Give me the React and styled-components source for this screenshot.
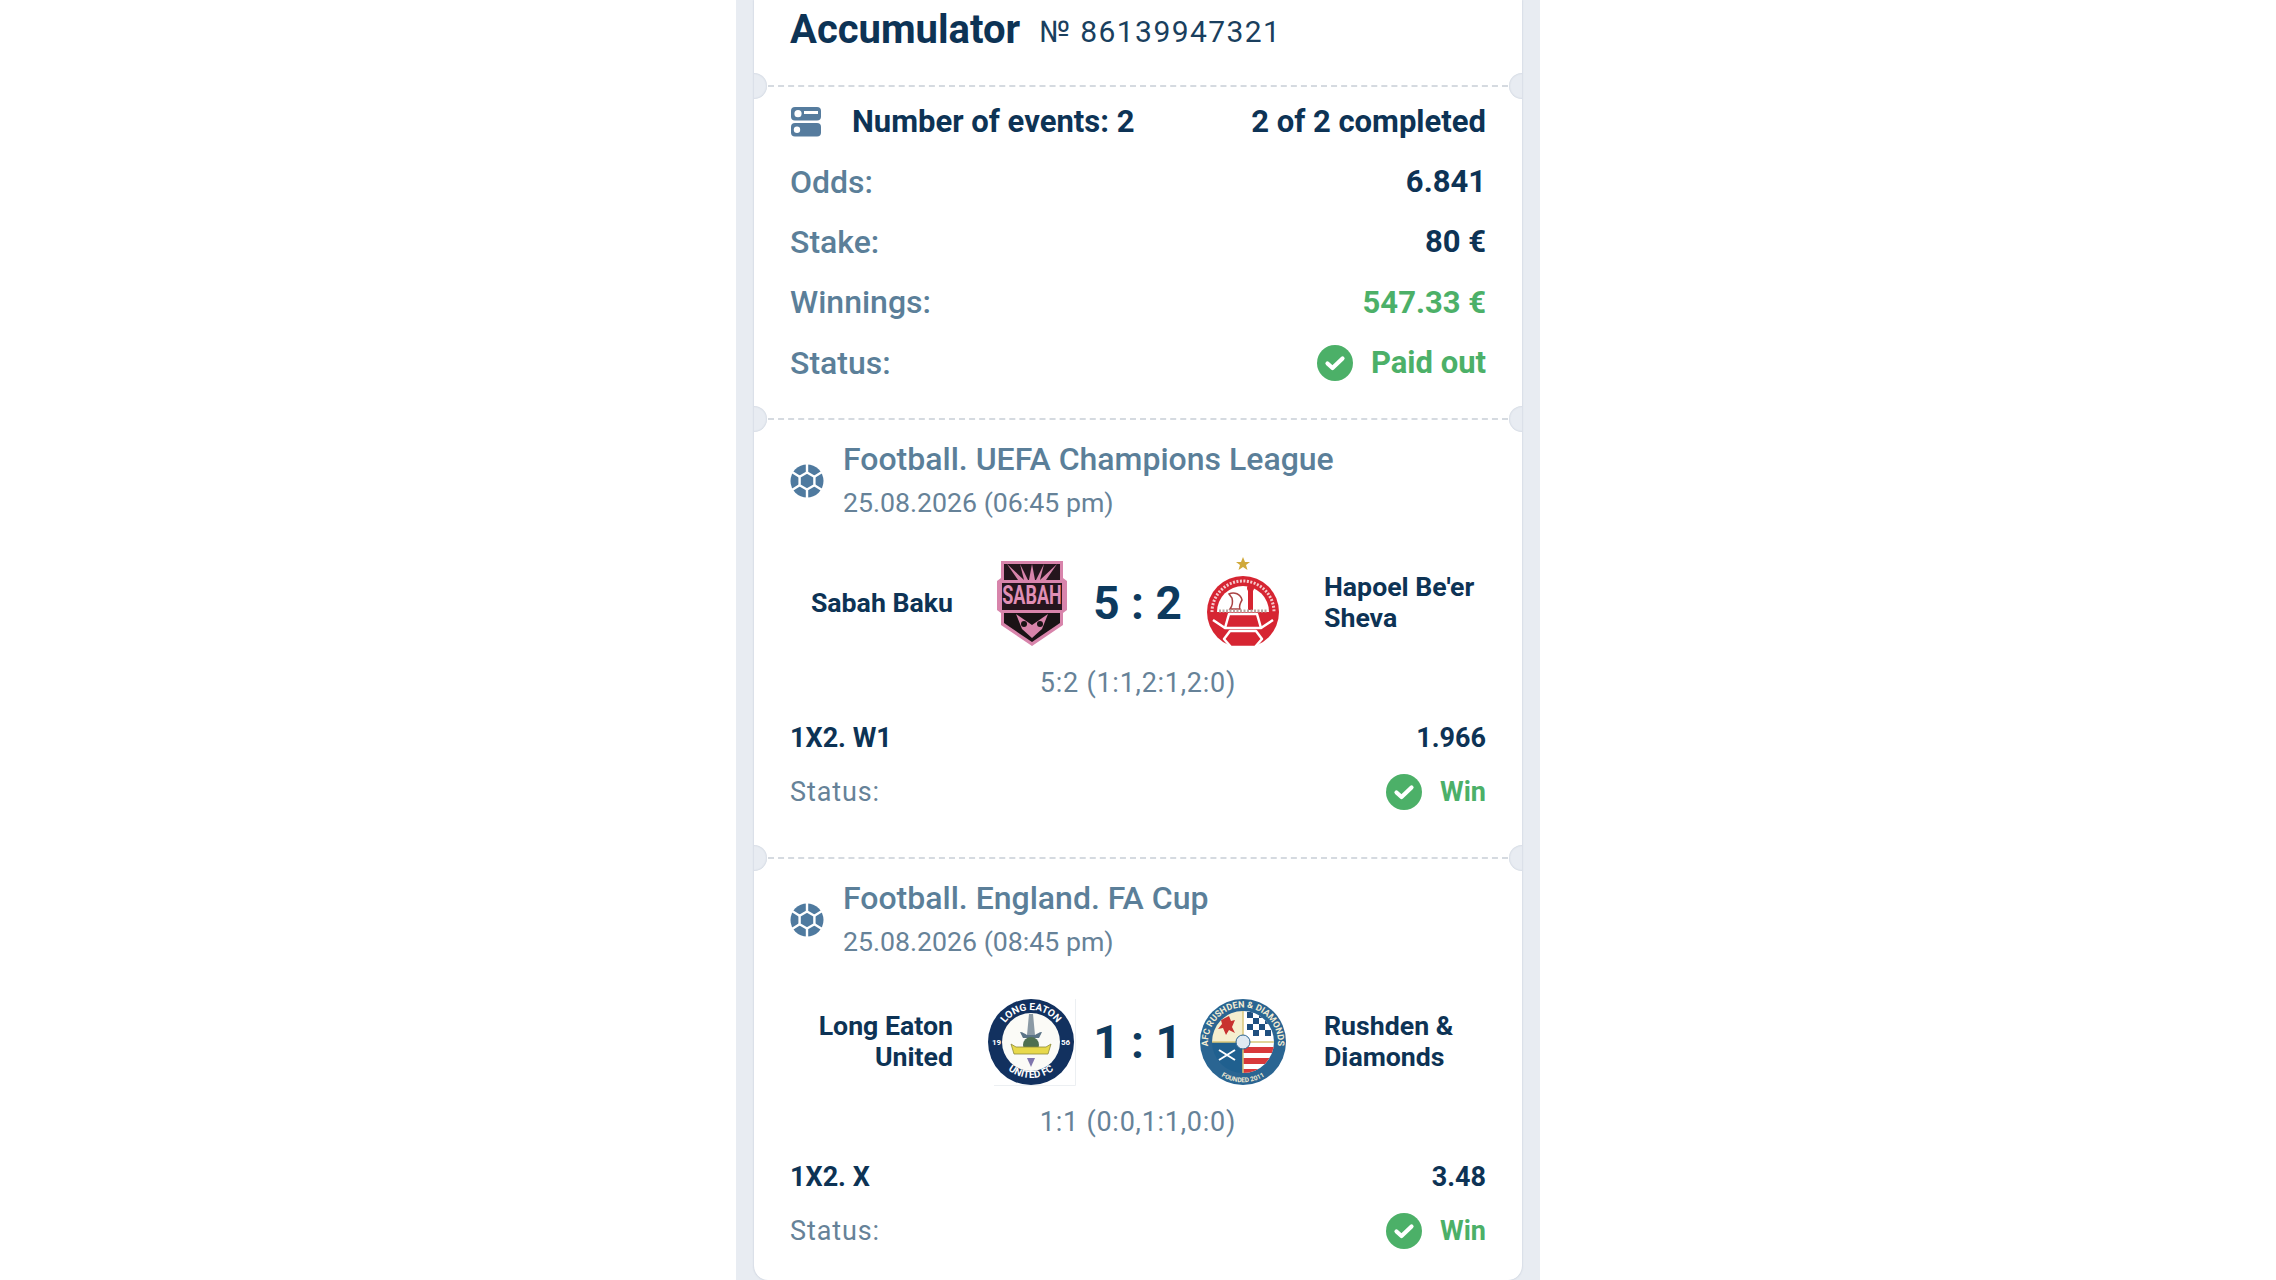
import React from "react";
import styled, { createGlobalStyle } from "styled-components";

const GlobalStyle = createGlobalStyle`
  html, body {
    margin: 0;
    padding: 0;
    height: 1280px;
    overflow: hidden;
    background: #fff;
    font-family: Roboto, "Liberation Sans", sans-serif;
  }
`;

const Strip = styled.div`
  width: 768px;
  height: 1280px;
  margin-left: 736px;
  padding: 0 18px;
  background: #e8ecf2;
  overflow: hidden;
`;

const Ticket = styled.div`
  height: 1280px;
  background: #fff;
  border-radius: 0 0 14px 14px;
  color: #0d3355;
  overflow: hidden;
  box-shadow: 0 0 2px rgba(90, 110, 140, 0.35);
`;

const Header = styled.div`
  display: flex;
  align-items: baseline;
  gap: 19px;
  height: 85px;
  padding: 5px 36px 0;
  box-sizing: border-box;
`;

const Title = styled.span`
  font-size: 40px;
  line-height: 50px;
  font-weight: 700;
`;

const Number = styled.span`
  font-size: 30px;
  letter-spacing: 1.4px;
  color: #1a3f5e;
  position: relative;
  top: -1px;
`;

const Divider = styled.div`
  position: relative;
  height: 0;
  margin: 0 14px;
  border-top: 2px dashed #d5dae0;

  &::before,
  &::after {
    content: "";
    position: absolute;
    top: -14px;
    width: 26px;
    height: 26px;
    border-radius: 50%;
    background: #e8ecf2;
    box-shadow: inset 0 0 2px rgba(90, 110, 140, 0.3);
  }
  &::before { left: -27px; }
  &::after { right: -27px; }
`;

const Summary = styled.div`
  padding: 4px 36px 0;
  height: 331px;
  box-sizing: border-box;
`;

const SummaryRow = styled.div`
  display: flex;
  align-items: center;
  justify-content: space-between;
  height: 60.4px;
  font-size: 31px;
  font-weight: 700;
  color: ${(p) => p.$color || "inherit"};
`;

const RowLeft = styled.div`
  display: flex;
  align-items: center;
  gap: 30px;
`;

const Label = styled.span`
  font-size: 32px;
  font-weight: 500;
  color: #5b7f99;
`;

const Status = styled.div`
  display: flex;
  align-items: center;
  gap: ${(p) => p.$gap}px;
  color: #4cb068;
  font-size: ${(p) => p.$size}px;
  font-weight: 700;
`;

const Event = styled.div`
  height: ${(p) => p.$height}px;
  padding: 0 36px;
  box-sizing: border-box;
`;

const League = styled.div`
  display: flex;
  align-items: center;
  gap: 19px;
  padding-top: 20px;
`;

const LeagueText = styled.div`
  display: flex;
  flex-direction: column;
  gap: 8px;
  color: #5b7f99;
`;

const LeagueName = styled.div`
  font-size: 32px;
  line-height: 38px;
  font-weight: 500;
`;

const LeagueDate = styled.div`
  font-size: 26.7px;
  line-height: 35px;
  color: #668298;
`;

const Match = styled.div`
  display: grid;
  grid-template-columns: 163px 123px 123px 125px 162px;
  align-items: center;
  margin-top: 36px;
  height: 92px;
`;

const TeamName = styled.div`
  font-size: 26.7px;
  line-height: 31px;
  font-weight: 700;
  text-align: ${(p) => p.$align};
`;

const Crest = styled.div`
  display: flex;
  justify-content: center;
  width: 88px;
  justify-self: ${(p) => p.$side};
`;

const Score = styled.div`
  font-size: 46px;
  font-weight: 700;
  text-align: center;
  color: #0d3a5e;
`;

const Periods = styled.div`
  margin-top: 17px;
  font-size: 27px;
  line-height: 34px;
  color: #668298;
  text-align: center;
  letter-spacing: 0.75px;
`;

const BetRow = styled.div`
  display: flex;
  align-items: center;
  justify-content: space-between;
  height: 54px;
  font-size: 27px;
  font-weight: 700;
  margin-top: ${(p) => p.$top || 0}px;
`;

const BetLabel = styled.span`
  font-weight: 400;
  color: #668298;
  letter-spacing: 0.9px;
`;

const CheckIcon = ({ size }) => (
  <svg width={size} height={size} viewBox="0 0 36 36">
    <circle cx="18" cy="18" r="18" fill="#4cb068" />
    <path d="M10.5 18.5l5 4.500 10-9.500" fill="none" stroke="#fff" strokeWidth="4.200" strokeLinecap="round" strokeLinejoin="round" />
  </svg>
);

const EventsIcon = () => (
  <svg width="32" height="32" viewBox="0 0 32 32">
    <rect x="1" y="2" width="30" height="13.500" rx="4" fill="#567c9e" />
    <rect x="1" y="18" width="30" height="13.500" rx="4" fill="#567c9e" />
    <circle cx="8" cy="8.700" r="3.600" fill="#fff" />
    <circle cx="7" cy="24.700" r="3.200" fill="#fff" />
    <rect x="14" y="6" width="14" height="3" fill="#fff" />
  </svg>
);

const BallIcon = () => (
  <svg width="34" height="34" viewBox="0 0 34 34">
    <circle cx="17" cy="17" r="16.500" fill="#4f7a9f" />
    <path d="M17 8.500L24.400 12.750V21.250L17 25.500 9.600 21.250V12.750z" fill="#4f7a9f" stroke="#fff" strokeWidth="2.400" strokeLinejoin="round" />
    <path d="M17 8.500V0M24.400 12.750L32 8M24.400 21.250L32 26M17 25.500V34M9.600 21.250L2 26M9.600 12.750L2 8" stroke="#fff" strokeWidth="2.400" />
  </svg>
);

const SabahCrest = () => (
  <svg width="70" height="86" viewBox="0 0 70 86">
    <path d="M4 1h62v17l4 3v29l-4 3v12L35 86 4 65V53l-4-3V21l4-3z" fill="#d884ab" />
    <path d="M7 4h56v16H7z" fill="#25151d" />
    <path d="M10 4l17 16h-6zM23 4l8 16h-4zM35 4l3 16h-6zM47 4l-8 16h4zM60 4L43 20h6z" fill="#d884ab" />
    <rect x="3" y="21" width="64" height="31" fill="#d884ab" />
    <rect x="5" y="23" width="60" height="27" fill="#25151d" />
    <path d="M7 53h56v10L35 82 7 63z" fill="#1a1316" />
    <path d="M19 54l16 11 16-11-6 15-10 9-10-9z" fill="#d884ab" />
    <circle cx="27" cy="64" r="3" fill="#1a1316" />
    <circle cx="43" cy="64" r="3" fill="#1a1316" />
    <text transform="translate(35 44) scale(1 1.400)" textAnchor="middle" fontFamily="Roboto, sans-serif" fontSize="18" fontWeight="700" fill="#e08fb5">SABAH</text>
  </svg>
);

const HapoelCrest = () => (
  <svg width="76" height="92" viewBox="0 0 76 92">
    <path d="M38 0l2 5h5l-4 3 1.500 5L38 10l-4.500 3L35 8l-4-3h5z" fill="#d0a93a" />
    <circle cx="38" cy="55" r="36" fill="#d62532" />
    <path d="M7 55a31 31 0 0 1 62 0" fill="none" stroke="#f6c9cc" strokeWidth="3" strokeDasharray="2 1.500" />
    <path d="M12 55a26 26 0 0 1 52 0z" fill="#fff" />
    <path d="M24 57h28l4 14H20z" fill="#d62532" stroke="#fff" strokeWidth="2.500" strokeLinejoin="round" />
    <path d="M25 74h26l6 8-7 8H26l-7-8z" fill="#d62532" stroke="#fff" strokeWidth="2.500" strokeLinejoin="round" />
    <path d="M8 63l12 8M68 63l-12 8" stroke="#fff" strokeWidth="2.500" />
    <rect x="43" y="31" width="5" height="22" fill="#d62532" />
    <circle cx="45.500" cy="31" r="3.500" fill="#d62532" />
    <path d="M24 37a9 9 0 0 1 13 6c-3 5-3 7-2 9H25c3-4 3-7 2-11z" fill="none" stroke="#a44" strokeWidth="1.500" />
    <path d="M14 54h49" stroke="#b7a7a0" strokeWidth="3" strokeDasharray="2 1.500" />
  </svg>
);

const LongEatonCrest = () => (
  <svg width="88" height="88" viewBox="0 0 88 88">
    <path d="M87.500 1v86.500H6" fill="none" stroke="#eceff2" strokeWidth="1" />
    <circle cx="43" cy="44" r="43" fill="#12315f" />
    <circle cx="43" cy="44" r="29" fill="#fbfbf7" />
    <path id="le-top" d="M11 44a32 32 0 0 1 64 0" fill="none" />
    <path id="le-bot" d="M7 44a36 36 0 0 0 72 0" fill="none" />
    <text fontFamily="Roboto, sans-serif" fontSize="10" fontWeight="700" fill="#fff">
      <textPath href="#le-top" startOffset="50%" textAnchor="middle">LONG EATON</textPath>
    </text>
    <text fontFamily="Roboto, sans-serif" fontSize="10" fontWeight="700" fill="#fff">
      <textPath href="#le-bot" startOffset="50%" textAnchor="middle">UNITED FC</textPath>
    </text>
    <text x="4" y="47" fontFamily="Roboto, sans-serif" fontSize="8" fontWeight="700" fill="#fff">19</text>
    <text x="73" y="47" fontFamily="Roboto, sans-serif" fontSize="8" fontWeight="700" fill="#fff">56</text>
    <path d="M41 16h4l2 21h-8z" fill="#8b9aa5" />
    <path d="M32 34c3 0 5 2 7 3h8c2-1 4-3 7-3l-3 6H35z" fill="#5b7487" />
    <circle cx="43" cy="47" r="8" fill="#4f7050" />
    <path d="M23 46l5 3h30l5-3-3 10H26z" fill="#e8d94b" stroke="#8d8a3a" strokeWidth="0.800" />
    <path d="M39 60h8l-4 9z" fill="#7f76ad" />
  </svg>
);

const RushdenCrest = () => (
  <svg width="88" height="88" viewBox="0 0 88 88">
    <defs>
      <clipPath id="rd-shield"><circle cx="44" cy="44" r="31" /></clipPath>
    </defs>
    <circle cx="44" cy="44" r="43" fill="#2a6592" />
    <path id="rd-top" d="M13.700 62A35 35 0 1 1 74.300 62" fill="none" />
    <path id="rd-bot" d="M14 71A40.400 40.400 0 0 0 74 71" fill="none" />
    <text fontFamily="Roboto, sans-serif" fontSize="9" fontWeight="700" fill="#f3ecd2">
      <textPath href="#rd-top" startOffset="50%" textAnchor="middle">AFC RUSHDEN & DIAMONDS</textPath>
    </text>
    <text fontFamily="Roboto, sans-serif" fontSize="6.500" fontWeight="700" fill="#f3ecd2">
      <textPath href="#rd-bot" startOffset="50%" textAnchor="middle">FOUNDED 2011</textPath>
    </text>
    <g clipPath="url(#rd-shield)">
      <rect x="10" y="10" width="34" height="34" fill="#f5efcf" />
      <rect x="44" y="10" width="34" height="34" fill="#fff" />
      <rect x="10" y="44" width="34" height="34" fill="#20608f" />
      <rect x="44" y="44" width="34" height="34" fill="#fff" />
      <path d="M48 14h6v6h-6zM60 14h6v6h-6zM54 20h6v6h-6zM66 20h6v6h-6zM48 26h6v6h-6zM60 26h6v6h-6zM54 32h6v6h-6zM66 32h6v6h-6z" fill="#1f4f7f" />
      <rect x="44" y="49" width="34" height="6" fill="#d8393b" />
      <rect x="44" y="60" width="34" height="6" fill="#d8393b" />
      <rect x="44" y="71" width="34" height="6" fill="#d8393b" />
      <path d="M22 22l8-4 2 5 4-1-3 7 3 6-6-3-3 5-3-7-5 1 4-5z" fill="#c8322f" />
      <path d="M20 52l16 10M36 52L20 62" stroke="#fff" strokeWidth="2" />
      <path d="M44 10v68M10 44h68" stroke="#d8c67a" strokeWidth="1.500" />
    </g>
    <circle cx="44" cy="44" r="7" fill="#dfe9f2" stroke="#2a6592" strokeWidth="1" />
  </svg>
);

const events = [
  {
    height: 437,
    league: "Football. UEFA Champions League",
    date: "25.08.2026 (06:45 pm)",
    home: "Sabah Baku",
    away: ["Hapoel Be'er", "Sheva"],
    homeCrest: <SabahCrest />,
    awayCrest: <HapoelCrest />,
    score: "5 : 2",
    periods: "5:2 (1:1,2:1,2:0)",
    market: "1X2. W1",
    odds: "1.966",
  },
  {
    height: 422,
    league: "Football. England. FA Cup",
    date: "25.08.2026 (08:45 pm)",
    home: ["Long Eaton", "United"],
    away: ["Rushden &", "Diamonds"],
    homeCrest: <LongEatonCrest />,
    awayCrest: <RushdenCrest />,
    score: "1 : 1",
    periods: "1:1 (0:0,1:1,0:0)",
    market: "1X2. X",
    odds: "3.48",
  },
];

function Lines({ value }) {
  const lines = Array.isArray(value) ? value : [value];
  return lines.map((line) => <div key={line}>{line}</div>);
}

function App() {
  return (
    <>
      <GlobalStyle />
      <Strip>
        <Ticket>
          <Header>
            <Title>Accumulator</Title>
            <Number>№ 86139947321</Number>
          </Header>
          <Divider />
          <Summary>
            <SummaryRow>
              <RowLeft>
                <EventsIcon />
                <span>Number of events: 2</span>
              </RowLeft>
              <span>2 of 2 completed</span>
            </SummaryRow>
            <SummaryRow>
              <Label>Odds:</Label>
              <span>6.841</span>
            </SummaryRow>
            <SummaryRow>
              <Label>Stake:</Label>
              <span>80 €</span>
            </SummaryRow>
            <SummaryRow $color="#4cb068">
              <Label>Winnings:</Label>
              <span>547.33 €</span>
            </SummaryRow>
            <SummaryRow>
              <Label>Status:</Label>
              <Status $gap={18} $size={31}>
                <CheckIcon size={36} />
                Paid out
              </Status>
            </SummaryRow>
          </Summary>
          {events.map((event) => (
            <React.Fragment key={event.league}>
              <Divider />
              <Event $height={event.height}>
                <League>
                  <BallIcon />
                  <LeagueText>
                    <LeagueName>{event.league}</LeagueName>
                    <LeagueDate>{event.date}</LeagueDate>
                  </LeagueText>
                </League>
                <Match>
                  <TeamName $align="right">
                    <Lines value={event.home} />
                  </TeamName>
                  <Crest $side="end">{event.homeCrest}</Crest>
                  <Score>{event.score}</Score>
                  <Crest $side="start">{event.awayCrest}</Crest>
                  <TeamName $align="left">
                    <Lines value={event.away} />
                  </TeamName>
                </Match>
                <Periods>{event.periods}</Periods>
                <BetRow $top={11}>
                  <span>{event.market}</span>
                  <span>{event.odds}</span>
                </BetRow>
                <BetRow>
                  <BetLabel>Status:</BetLabel>
                  <Status $gap={18} $size={27}>
                    <CheckIcon size={36} />
                    Win
                  </Status>
                </BetRow>
              </Event>
            </React.Fragment>
          ))}
        </Ticket>
      </Strip>
    </>
  );
}

export default App;
